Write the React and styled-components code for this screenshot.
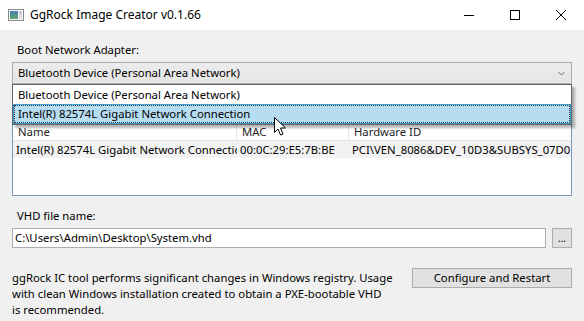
import React from "react";
import styled, { createGlobalStyle } from "styled-components";

const Global = createGlobalStyle`
  html, body { margin: 0; padding: 0; background: #f0f0f0; }
  body { font-family: "Noto Sans", "Open Sans", sans-serif; font-size: 11.3px; color: #000; }
  * { box-sizing: border-box; }
`;

const Window = styled.div`
  width: 584px;
  height: 321px;
  display: flex;
  flex-direction: column;
  background: #f0f0f0;
  overflow: hidden;
`;

const TitleBar = styled.div`
  height: 30px;
  background: #fff;
  display: flex;
  align-items: center;
`;

const AppIcon = styled.div`
  width: 30px;
  display: flex;
  justify-content: center;
  padding-left: 2px;
`;

const Title = styled.div`
  flex: 1;
  font-size: 12px;
  line-height: 16px;
`;

const Controls = styled.div`
  display: flex;
  height: 30px;
`;

const CtrlButton = styled.div`
  width: 46px;
  height: 30px;
  display: flex;
  align-items: center;
  justify-content: center;
`;

const Body = styled.div`
  flex: 1;
  display: flex;
  flex-direction: column;
  padding: 12px 12px 0 12px;
`;

const Label = styled.div`
  height: 16px;
  line-height: 16px;
  padding-left: 5px;
  margin-top: ${(p) => p.$mt || 0}px;
`;

const ComboWrap = styled.div`
  position: relative;
  margin-top: 4px;
  z-index: 2;
`;

const Combo = styled.div`
  height: 22px;
  border: 1px solid #acacac;
  background: linear-gradient(#ececec, #e5e5e5);
  display: flex;
  align-items: center;
  padding-left: 5px;
  padding-right: 6px;
`;

const ComboText = styled.div`
  flex: 1;
  line-height: 16px;
`;

const Dropdown = styled.div`
  position: absolute;
  top: 22px;
  left: 0;
  right: 0;
  height: 41px;
  background: #fff;
  border: 1px solid #646464;
  box-shadow: 3px 3px 2px rgba(0, 0, 0, 0.28);
  display: flex;
  flex-direction: column;
`;

const DropItem = styled.div`
  height: ${(p) => (p.$selected ? 20 : 19)}px;
  line-height: 16px;
  padding: ${(p) => (p.$selected ? "1px 4px" : "2px 5px")};
  background: ${(p) => (p.$selected ? "#b6ddf2" : "transparent")};
  border: ${(p) => (p.$selected ? "1px solid #3c9fd6" : "none")};
  outline: ${(p) => (p.$selected ? "1px dotted #333" : "none")};
  outline-offset: -2px;
`;

const ListView = styled.div`
  margin-top: 35px;
  height: 77px;
  border: 1px solid #7c95b8;
  background: #fff;
  display: flex;
  flex-direction: column;
  overflow: hidden;
`;

const Row = styled.div`
  display: grid;
  grid-template-columns: 224px 112px 1fr;
  height: ${(p) => (p.$header ? 21 : 17)}px;
  background: ${(p) => (p.$header ? "#fff" : "#f2f2f2")};
  border-bottom: ${(p) => (p.$header ? "1px solid #e5e5e5" : "none")};
  align-items: center;
`;

const Cell = styled.div`
  padding-left: ${(p) => (p.$header ? 5 : 3)}px;
  padding-right: 1px;
  height: 100%;
  line-height: ${(p) => (p.$header ? 24 : 17)}px;
  white-space: nowrap;
  overflow: hidden;
  text-overflow: clip;
  border-right: ${(p) => (p.$header && !p.$last ? "1px solid #e5e5e5" : "none")};
  color: ${(p) => (p.$header ? "#222" : "#000")};
`;

const InputRow = styled.div`
  display: flex;
  gap: 6px;
  margin-top: 4px;
  height: 20px;
`;

const TextBox = styled.div`
  flex: 1;
  border: 1px solid #abadb3;
  background: #fff;
  line-height: 18px;
  padding-left: 2px;
`;

const Button = styled.div`
  width: ${(p) => p.$w}px;
  height: 20px;
  border: 1px solid #adadad;
  background: #e1e1e1;
  display: flex;
  align-items: center;
  justify-content: center;
  line-height: 16px;
  font-size: ${(p) => p.$fs || 11.3}px;
`;

const BottomRow = styled.div`
  display: flex;
  justify-content: space-between;
  align-items: flex-start;
  margin-top: 20px;
`;

const Note = styled.div`
  width: 386px;
  line-height: 16px;
  padding-top: 2px;
`;

const Cursor = styled.svg`
  position: absolute;
  left: 274px;
  top: 117px;
  z-index: 5;
`;

export default function App() {
  return (
    <>
      <Global />
      <Window>
        <TitleBar>
          <AppIcon>
            <svg width="16" height="12" viewBox="0 0 16 12">
              <defs>
                <linearGradient id="ig" x1="0" y1="0" x2="0" y2="1">
                  <stop offset="0" stopColor="#4a7fb8" />
                  <stop offset="1" stopColor="#5ea869" />
                </linearGradient>
              </defs>
              <rect x="0.5" y="0.5" width="15" height="11" fill="#f4f4f4" stroke="#8a8a8a" />
              <rect x="2" y="2" width="8" height="8" fill="url(#ig)" />
              <rect x="11" y="2" width="3" height="8" fill="#d8dde2" />
              <rect x="12" y="3" width="1" height="2" fill="#aab" />
            </svg>
          </AppIcon>
          <Title>GgRock Image Creator v0.1.66</Title>
          <Controls>
            <CtrlButton>
              <svg width="10" height="10" viewBox="0 0 10 10">
                <line x1="0" y1="5.5" x2="10" y2="5.5" stroke="#000" strokeWidth="1" />
              </svg>
            </CtrlButton>
            <CtrlButton>
              <svg width="10" height="10" viewBox="0 0 10 10">
                <rect x="0.5" y="0.5" width="9" height="9" fill="none" stroke="#000" strokeWidth="1" />
              </svg>
            </CtrlButton>
            <CtrlButton>
              <svg width="10" height="10" viewBox="0 0 10 10">
                <path d="M0 0 L10 10 M10 0 L0 10" stroke="#000" strokeWidth="1" />
              </svg>
            </CtrlButton>
          </Controls>
        </TitleBar>
        <Body>
          <Label>Boot Network Adapter:</Label>
          <ComboWrap>
            <Combo>
              <ComboText>Bluetooth Device (Personal Area Network)</ComboText>
              <svg width="7" height="5" viewBox="0 0 7 5">
                <path d="M0.5 1 L3.5 4 L6.5 1" fill="none" stroke="#707070" strokeWidth="1" />
              </svg>
            </Combo>
            <Dropdown>
              <DropItem>Bluetooth Device (Personal Area Network)</DropItem>
              <DropItem $selected>Intel(R) 82574L Gigabit Network Connection</DropItem>
            </Dropdown>
          </ComboWrap>
          <ListView>
            <Row $header>
              <Cell $header>Name</Cell>
              <Cell $header>MAC</Cell>
              <Cell $header $last>Hardware ID</Cell>
            </Row>
            <Row>
              <Cell>Intel(R) 82574L Gigabit Network Connection</Cell>
              <Cell>00:0C:29:E5:7B:BE</Cell>
              <Cell>PCI\VEN_8086&amp;DEV_10D3&amp;SUBSYS_07D0</Cell>
            </Row>
          </ListView>
          <Label $mt={12}>VHD file name:</Label>
          <InputRow>
            <TextBox>C:\Users\Admin\Desktop\System.vhd</TextBox>
            <Button $w={20} $fs={10}>...</Button>
          </InputRow>
          <BottomRow>
            <Note>
              ggRock IC tool performs significant changes in Windows registry. Usage with clean Windows installation created to obtain a PXE-bootable VHD
              <br />
              is recommended.
            </Note>
            <Button $w={160}>Configure and Restart</Button>
          </BottomRow>
        </Body>
        <Cursor width="13" height="19" viewBox="0 0 13 19">
          <path d="M0.5 0.5 L0.5 15.5 L4 12 L6.5 18 L9 17 L6.5 11 L11.5 11 Z" fill="#fff" stroke="#000" strokeWidth="1" strokeLinejoin="miter" />
        </Cursor>
      </Window>
    </>
  );
}
